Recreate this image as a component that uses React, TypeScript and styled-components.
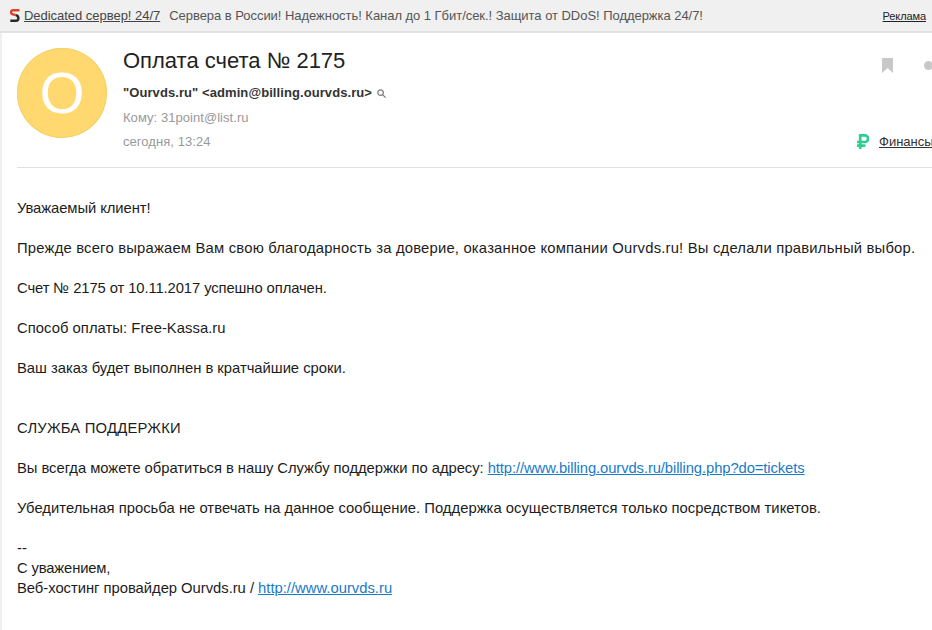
import React from 'react'
import styled, { createGlobalStyle } from 'styled-components'

const GlobalStyle = createGlobalStyle`
  html, body {
    margin: 0;
    padding: 0;
    background: #fff;
    overflow: hidden;
  }
  body {
    font-family: 'Liberation Sans', Arial, sans-serif;
  }
`

const Page = styled.div`
  width: 932px;
  height: 630px;
  overflow: hidden;
  background: #fff;
`

const AdBar = styled.div`
  display: flex;
  align-items: center;
  height: 31px;
  padding: 0 6px 0 10px;
  background: #f0f0f0;
  border-bottom: 2px solid #e3e3e3;
  font-size: 13px;
  color: #555;
  white-space: nowrap;
`

const AdTitle = styled.a`
  margin-left: 4px;
  color: #444;
  letter-spacing: -0.03px;
  text-decoration: underline;
`

const AdText = styled.span`
  margin-left: 9px;
  flex: 1;
  color: #555;
  letter-spacing: -0.04px;
`

const AdLabel = styled.a`
  font-size: 11px;
  letter-spacing: -0.1px;
  color: #222;
  text-decoration: underline;
`

const Content = styled.div`
  height: 597px;
  border-left: 2px solid #f0f0f0;
`

const Header = styled.div`
  display: flex;
  height: 135px;
  margin-left: 15px;
  padding-top: 15px;
  box-sizing: border-box;
  border-bottom: 1px solid #e0e0e0;
`

const Avatar = styled.div`
  width: 90px;
  height: 90px;
  border-radius: 50%;
  background: #ffd96f;
  box-shadow: inset 0 0 0 1px #f2d06c;
  color: #fff;
  font-size: 58px;
  line-height: 90px;
  text-align: center;
  flex: none;
`

const Meta = styled.div`
  margin-left: 16px;
  flex: 1;
`

const Subject = styled.div`
  margin-top: 1px;
  font-size: 22px;
  line-height: 24px;
  color: #222;
`

const Sender = styled.div`
  display: flex;
  align-items: center;
  gap: 5px;
  margin-top: 11px;
  font-size: 13px;
  line-height: 18px;
  font-weight: bold;
  letter-spacing: 0.08px;
  color: #333;
`

const Recipient = styled.div`
  margin-top: 7px;
  font-size: 13px;
  line-height: 18px;
  letter-spacing: 0.05px;
  color: #999;
`

const DateLine = styled.div`
  margin-top: 6px;
  font-size: 13px;
  line-height: 18px;
  letter-spacing: 0.06px;
  color: #999;
`

const Side = styled.div`
  flex: none;
  width: 75px;
  display: flex;
  flex-direction: column;
  overflow: hidden;
`

const Actions = styled.div`
  display: flex;
  align-items: center;
  margin-top: 10px;
  padding-left: 25px;
  gap: 31px;
`

const Dot = styled.span`
  width: 9px;
  height: 9px;
  border-radius: 50%;
  background: #c8c8c8;
  flex: none;
`

const Category = styled.div`
  display: flex;
  align-items: center;
  gap: 10px;
  margin-top: 61px;
  white-space: nowrap;
`

const CategoryLink = styled.a`
  font-size: 13px;
  color: #333;
  text-decoration: underline;
`

const Body = styled.div`
  padding: 30px 0 0 15px;
  font-size: 14.8px;
  line-height: 20px;
  color: #1c1c1c;
  white-space: nowrap;
`

const Paragraph = styled.p<{ $gap?: number; $track?: number }>`
  margin: ${(p) => p.$gap ?? 20}px 0 0;
  letter-spacing: ${(p) => p.$track ?? 0}px;
`

const Line = styled.span<{ $track?: number }>`
  display: block;
  letter-spacing: ${(p) => p.$track ?? 0}px;
`

const Link = styled.a<{ $track?: number }>`
  color: #1a7ac8;
  letter-spacing: ${(p) => p.$track ?? 0}px;
  text-decoration: underline;
`

const SearchIcon = () => (
  <svg width="9" height="9" viewBox="0 0 9 9" fill="none" stroke="#777" strokeWidth="1.2">
    <circle cx="3.6" cy="3.6" r="2.8" />
    <path d="M5.6 5.6 8.6 8.6" />
  </svg>
)

const BookmarkIcon = () => (
  <svg width="11" height="15" viewBox="0 0 11 15" style={{ flex: 'none' }}>
    <path d="M0 0h11v15L5.5 10 0 15z" fill="#c8c8c8" />
  </svg>
)

const RubleIcon = () => (
  <svg width="12" height="15" viewBox="0 0 12 15" fill="none" stroke="#2fce8f" strokeWidth="2.7" style={{ flex: 'none' }}>
    <path d="M3.2 15V1.4h4.6a3.3 3.3 0 0 1 0 6.6H0M0 11.6h8.4" />
  </svg>
)

const BrandIcon = () => (
  <svg width="10" height="13" viewBox="0 0 10 13" fill="none" strokeWidth="2.4" style={{ flex: 'none' }}>
    <path d="M9.5 1.3H3C.3 1.3.3 4.6 2.8 5.3L6 6.2" stroke="#d9442f" />
    <path d="M6 6.2c3.2.9 3.2 5.5 0 5.5H.3" stroke="#2b2b2b" />
  </svg>
)

export default function App() {
  return (
    <Page>
      <GlobalStyle />
      <AdBar>
        <BrandIcon />
        <AdTitle>Dedicated сервер! 24/7</AdTitle>
        <AdText>Сервера в России! Надежность! Канал до 1 Гбит/сек.! Защита от DDoS! Поддержка 24/7!</AdText>
        <AdLabel>Реклама</AdLabel>
      </AdBar>
      <Content>
        <Header>
          <Avatar>O</Avatar>
          <Meta>
            <Subject>Оплата счета № 2175</Subject>
            <Sender>
              "Ourvds.ru" &lt;admin@billing.ourvds.ru&gt;
              <SearchIcon />
            </Sender>
            <Recipient>Кому: 31point@list.ru</Recipient>
            <DateLine>сегодня, 13:24</DateLine>
          </Meta>
          <Side>
            <Actions>
              <BookmarkIcon />
              <Dot />
            </Actions>
            <Category>
              <RubleIcon />
              <CategoryLink>Финансы</CategoryLink>
            </Category>
          </Side>
        </Header>
        <Body>
          <Paragraph $gap={0} $track={-0.08}>Уважаемый клиент!</Paragraph>
          <Paragraph $track={0.2}>Прежде всего выражаем Вам свою благодарность за доверие, оказанное компании Ourvds.ru! Вы сделали правильный выбор.</Paragraph>
          <Paragraph $track={-0.1}>Счет № 2175 от 10.11.2017 успешно оплачен.</Paragraph>
          <Paragraph $track={0.04}>Способ оплаты: Free-Kassa.ru</Paragraph>
          <Paragraph $track={-0.02}>Ваш заказ будет выполнен в кратчайшие сроки.</Paragraph>
          <Paragraph $gap={40} $track={0.2}>СЛУЖБА ПОДДЕРЖКИ</Paragraph>
          <Paragraph $track={-0.05}>
            Вы всегда можете обратиться в нашу Службу поддержки по адресу:{' '}
            <Link $track={-0.1}>http://www.billing.ourvds.ru/billing.php?do=tickets</Link>
          </Paragraph>
          <Paragraph $track={0.02}>Убедительная просьба не отвечать на данное сообщение. Поддержка осуществляется только посредством тикетов.</Paragraph>
          <Paragraph>
            <Line>--</Line>
            <Line $track={-0.16}>С уважением,</Line>
            <Line $track={-0.03}>
              Веб-хостинг провайдер Ourvds.ru / <Link>http://www.ourvds.ru</Link>
            </Line>
          </Paragraph>
        </Body>
      </Content>
    </Page>
  )
}
